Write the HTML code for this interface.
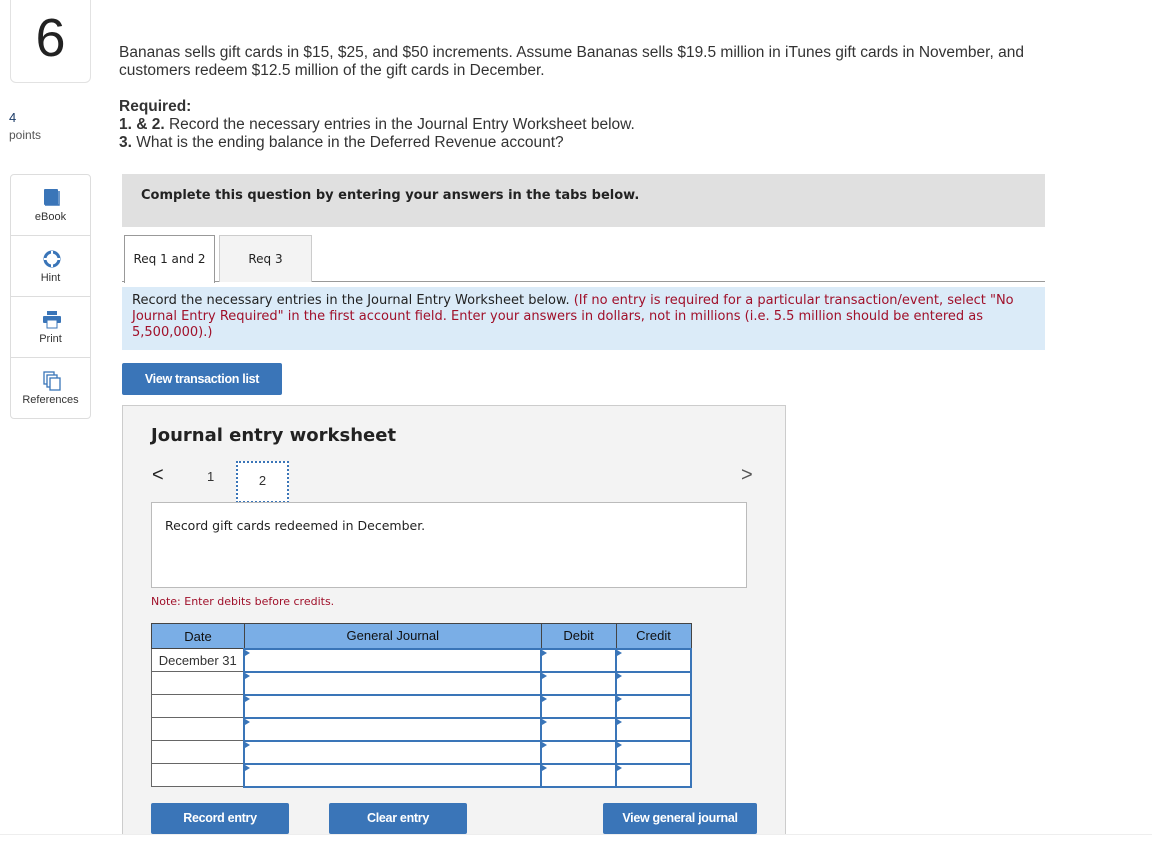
<!DOCTYPE html>
<html><head><meta charset="utf-8"><style>
*{box-sizing:border-box;margin:0;padding:0}
html,body{width:1152px;height:849px;overflow:hidden}
body{background:#fff;position:relative;font-family:"Liberation Sans",Arial,sans-serif;color:#333}
.a{position:absolute}
.v{font-family:"DejaVu Sans",Verdana,sans-serif}
.side{left:10px;top:174px;width:81px;height:245px;border:1px solid #ddd;border-radius:4px}
.si{height:61px;border-bottom:1px solid #ddd;text-align:center;font-size:11px;color:#333;position:relative}
.si:last-child{border-bottom:none}
.si svg{position:absolute;left:32px;top:13px}
.si span{position:absolute;left:0;right:0;top:36px}
.btn{background:#3a75b8;color:#fff;font-weight:bold;font-size:12.5px;text-align:center;border-radius:2px;letter-spacing:-0.3px}
table{border-collapse:collapse;position:absolute;left:151px;top:623px;width:541px;font-size:13px}
td,th{height:23px;border:1px solid #666;padding:0}
th{background:#7aaee6;font-weight:normal;color:#111;height:25px;border-color:#444}
td.in{border:2px solid #3a75b8;background:#fff;position:relative}
td.in:before{content:"";position:absolute;left:0;top:0;border-left:5px solid #3a75b8;border-top:3px solid transparent;border-bottom:3px solid transparent}
td.d{background:#fff}
</style></head><body>
<div class="a" style="left:10px;top:-10px;width:81px;height:93px;border:1px solid #e2e2e2;border-radius:6px;text-align:center;font-size:54px;line-height:94px;color:#222">6</div>
<div class="a" style="left:9px;top:110px;font-size:13px;color:#1a3a66">4</div>
<div class="a" style="left:9px;top:128px;font-size:12px;color:#555">points</div>
<div class="a side">
<div class="si"><svg width="18" height="20" viewBox="0 0 18 20"><rect x="1" y="1" width="14" height="16" rx="1" fill="#3a75b8"/><path d="M2 17h14V3" stroke="#3a75b8" fill="none" stroke-width="1.5"/></svg><span>eBook</span></div>
<div class="si"><svg width="18" height="20" viewBox="0 0 18 18"><circle cx="9" cy="9" r="7" fill="none" stroke="#3a75b8" stroke-width="3"/><circle cx="9" cy="9" r="3" fill="#fff"/><path d="M9 1v4M9 13v4M1 9h4M13 9h4" stroke="#fff" stroke-width="2"/></svg><span>Hint</span></div>
<div class="si"><svg width="18" height="20" viewBox="0 0 18 20"><rect x="4" y="1" width="10" height="4" fill="#3a75b8"/><rect x="0" y="6" width="18" height="7" rx="1" fill="#3a75b8"/><rect x="4" y="10" width="10" height="8" fill="#fff" stroke="#3a75b8"/></svg><span>Print</span></div>
<div class="si"><svg width="18" height="20" viewBox="0 0 18 20"><rect x="1" y="1" width="10" height="12" fill="#fff" stroke="#3a75b8" stroke-width="1.3"/><rect x="4" y="4" width="10" height="12" fill="#fff" stroke="#3a75b8" stroke-width="1.3"/><rect x="7" y="7" width="10" height="12" fill="#fff" stroke="#3a75b8" stroke-width="1.3"/></svg><span>References</span></div>
</div>
<div class="a" style="left:119px;top:44px;font-size:15.5px;line-height:18px;width:930px">Bananas sells gift cards in $15, $25, and $50 increments. Assume Bananas sells $19.5 million in iTunes gift cards in November, and customers redeem $12.5 million of the gift cards in December.</div>
<div class="a" style="left:119px;top:98px;font-size:15.5px;line-height:18px"><b>Required:</b><br><b>1. &amp; 2.</b> Record the necessary entries in the Journal Entry Worksheet below.<br><b>3.</b> What is the ending balance in the Deferred Revenue account?</div>
<div class="a v" style="left:122px;top:174px;width:923px;height:53px;background:#e0e0e0;font-weight:bold;font-size:13px;padding:14px 0 0 19px;color:#222">Complete this question by entering your answers in the tabs below.</div>
<div class="a" style="left:122px;top:281px;width:923px;height:1px;background:#999"></div>
<div class="a v" style="left:124px;top:235px;width:91px;height:48px;border:1px solid #999;border-bottom:none;background:#fff;font-size:12px;text-align:center;line-height:46px;color:#222">Req 1 and 2</div>
<div class="a v" style="left:219px;top:235px;width:93px;height:47px;border:1px solid #ccc;border-bottom:none;background:#f3f3f3;font-size:12px;text-align:center;line-height:46px;color:#222">Req 3</div>
<div class="a v" style="left:122px;top:287px;width:923px;height:63px;background:#dbebf8;font-size:13px;line-height:16px;padding:6px 14px 0 10px;color:#222">Record the necessary entries in the Journal Entry Worksheet below. <span style="color:#a0102a">(If no entry is required for a particular transaction/event, select "No Journal Entry Required" in the first account field. Enter your answers in dollars, not in millions (i.e. 5.5 million should be entered as 5,500,000).)</span></div>
<div class="a btn" style="left:122px;top:363px;width:160px;height:32px;line-height:32px">View transaction list</div>
<div class="a" style="left:122px;top:405px;width:664px;height:440px;background:#f3f3f3;border:1px solid #ccc"></div>
<div class="a v" style="left:151px;top:425px;font-size:18px;font-weight:bold;color:#222">Journal entry worksheet</div>
<div class="a" style="left:152px;top:464px;font-size:20px;color:#222">&lt;</div>
<div class="a" style="left:207px;top:469px;font-size:13px">1</div>
<div class="a" style="left:236px;top:461px;width:53px;height:42px;border:2px dotted #3a75b8;background:#fff;text-align:center;line-height:36px;font-size:13px">2</div>
<div class="a" style="left:741px;top:464px;font-size:20px;color:#555">&gt;</div>
<div class="a v" style="left:151px;top:502px;width:596px;height:86px;background:#fff;border:1px solid #bbb;font-size:12.5px;padding:15px 13px;color:#222">Record gift cards redeemed in December.</div>
<div class="a v" style="left:151px;top:595px;font-size:11px;color:#a0102a">Note: Enter debits before credits.</div>
<table>
<tr><th style="width:93px">Date</th><th style="width:297px">General Journal</th><th style="width:75px">Debit</th><th style="width:75px">Credit</th></tr>
<tr><td class="d" style="text-align:center">December 31</td><td class="in"></td><td class="in"></td><td class="in"></td></tr>
<tr><td class="d"></td><td class="in"></td><td class="in"></td><td class="in"></td></tr>
<tr><td class="d"></td><td class="in" style="border-top-color:#8a6d1a"></td><td class="in" style="border-top-color:#8a6d1a"></td><td class="in" style="border-top-color:#8a6d1a"></td></tr>
<tr><td class="d"></td><td class="in"></td><td class="in"></td><td class="in"></td></tr>
<tr><td class="d"></td><td class="in" style="border-top-color:#8a6d1a"></td><td class="in" style="border-top-color:#8a6d1a"></td><td class="in" style="border-top-color:#8a6d1a"></td></tr>
<tr><td class="d"></td><td class="in"></td><td class="in"></td><td class="in"></td></tr>
</table>
<div class="a btn" style="left:151px;top:803px;width:138px;height:31px;line-height:31px">Record entry</div>
<div class="a btn" style="left:329px;top:803px;width:138px;height:31px;line-height:31px">Clear entry</div>
<div class="a btn" style="left:603px;top:803px;width:154px;height:31px;line-height:31px">View general journal</div>
<div class="a" style="left:0;top:834px;width:1152px;height:15px;background:#fff;border-top:1px solid #eee"></div>
</body></html>
